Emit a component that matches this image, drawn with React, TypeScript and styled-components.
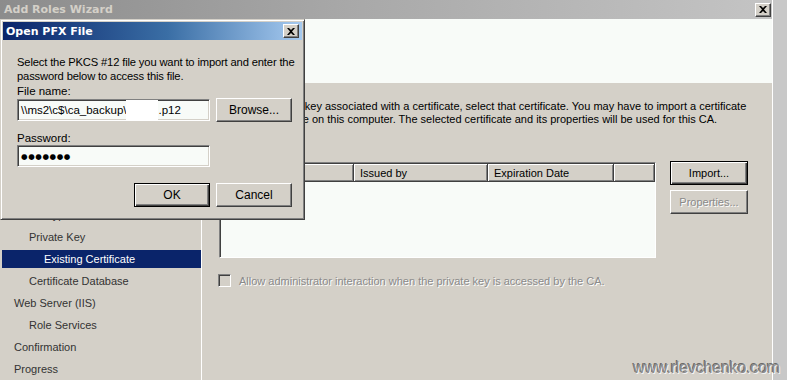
import styled, { createGlobalStyle } from "styled-components";

const GlobalStyle = createGlobalStyle`
    html, body {
        margin: 0;
        padding: 0;
        width: 787px;
        height: 380px;
        overflow: hidden;
        background: #c8c8c8;
    }
    * { box-sizing: border-box; }
`;

const Desktop = styled.div`
    position: relative;
    width: 787px;
    height: 380px;
    display: flex;
    background: #c8c8c8;
    font-family: "Liberation Sans", Arial, sans-serif;
    font-size: 11px;
    color: #000;
`;

const Wizard = styled.div`
    width: 773px;
    height: 380px;
    display: flex;
    flex-direction: column;
    background: #d4d0c8;
    border-right: 1px solid #ffffff;
`;

const TitleBar = styled.div<{ $active?: boolean }>`
    height: ${(p) => (p.$active ? 18 : 19)}px;
    flex-shrink: 0;
    display: flex;
    align-items: center;
    justify-content: space-between;
    padding: 0 ${(p) => (p.$active ? 3 : 1)}px 0 ${(p) => (p.$active ? 3 : 4)}px;
    background: ${(p) =>
        p.$active
            ? "linear-gradient(90deg, #0a246a 0%, #3a6ea5 55%, #a6caf0 100%)"
            : "linear-gradient(90deg, #8c8c8c 0%, #a8a8a8 45%, #c4c4c4 100%)"};
    color: ${(p) => (p.$active ? "#ffffff" : "#d4d0c8")};
    font-family: "DejaVu Sans", sans-serif;
    font-weight: bold;
    font-size: 11px;
`;

const CloseButton = styled.div`
    width: 16px;
    height: 14px;
    display: flex;
    align-items: center;
    justify-content: center;
    background: #d4d0c8;
    border-top: 1px solid #ffffff;
    border-left: 1px solid #ffffff;
    border-right: 1px solid #404040;
    border-bottom: 1px solid #404040;
    box-shadow: inset -1px -1px 0 #808080;
`;

const Header = styled.div`
    height: 64px;
    flex-shrink: 0;
    background: #f8fbf8;
`;

const Body = styled.div`
    flex: 1;
    display: flex;
`;

const Nav = styled.div`
    width: 202px;
    flex-shrink: 0;
    padding: 13px 0 0 2px;
    display: flex;
    flex-direction: column;
    gap: 4px;
    border-right: 1px solid #ffffff;
`;

const NavItem = styled.div<{ $level: number; $selected?: boolean }>`
    height: 18px;
    display: flex;
    align-items: center;
    padding-left: ${(p) => 12 + p.$level * 15}px;
    background: ${(p) => (p.$selected ? "#0a246a" : "transparent")};
    color: ${(p) => (p.$selected ? "#ffffff" : "#333333")};
    white-space: nowrap;
`;

const Content = styled.div`
    flex: 1;
    padding: 17px 0 0 17px;
    display: flex;
    flex-direction: column;
`;

const Description = styled.p`
    margin: 0;
    line-height: 13px;
    white-space: nowrap;
    color: #000;
`;

const Loose = styled.span`
    letter-spacing: 0.3px;
`;

const ListRow = styled.div`
    margin-top: 36px;
    display: flex;
    gap: 14px;
`;

const ListView = styled.div`
    width: 437px;
    height: 96px;
    background: #f8fbf8;
    border-top: 1px solid #808080;
    border-left: 1px solid #808080;
    border-right: 1px solid #ffffff;
    border-bottom: 1px solid #ffffff;
    box-shadow: inset 1px 1px 0 #404040;
    padding: 1px 0 0 1px;
`;

const ListHeader = styled.div`
    display: grid;
    grid-template-columns: 133px 134px 126px 1fr;
    height: 18px;
`;

const Column = styled.div`
    background: #d4d0c8;
    border-right: 1px solid #404040;
    border-bottom: 1px solid #404040;
    box-shadow: inset 1px 1px 0 #ffffff, inset -1px -1px 0 #808080;
    padding-left: 6px;
    display: flex;
    align-items: center;
    white-space: nowrap;
    overflow: hidden;
`;

const SideButtons = styled.div`
    display: flex;
    flex-direction: column;
    gap: 5px;
    margin-top: -1px;
`;

const Button = styled.button<{ $default?: boolean; $w: number; $size?: number }>`
    width: ${(p) => p.$w}px;
    height: 24px;
    padding: 0;
    background: #d4d0c8;
    font-family: "Liberation Sans", Arial, sans-serif;
    font-size: ${(p) => p.$size ?? 11}px;
    color: ${(p) => (p.disabled ? "#8a8a8a" : "#000")};
    text-shadow: ${(p) => (p.disabled ? "1px 1px 0 #ffffff" : "none")};
    border: 1px solid;
    border-color: ${(p) => (p.$default ? "#000" : "#ffffff #404040 #404040 #ffffff")};
    box-shadow: ${(p) =>
        p.$default
            ? "inset 1px 1px 0 #ffffff, inset -1px -1px 0 #404040, inset -2px -2px 0 #808080"
            : "inset -1px -1px 0 #808080"};
`;

const CheckRow = styled.div`
    margin-top: 16px;
    margin-left: -1px;
    display: flex;
    align-items: center;
    gap: 8px;
    color: #8a8a8a;
    text-shadow: 1px 1px 0 #ffffff;
    white-space: nowrap;
`;

const CheckBox = styled.div`
    width: 13px;
    height: 13px;
    background: #d4d0c8;
    border-top: 1px solid #808080;
    border-left: 1px solid #808080;
    border-right: 1px solid #ffffff;
    border-bottom: 1px solid #ffffff;
    box-shadow: inset 1px 1px 0 #404040;
`;

const Edge = styled.div`
    flex: 1;
    background: #c8c8c8;
`;

const Dialog = styled.div`
    position: absolute;
    left: 0;
    top: 19px;
    width: 305px;
    height: 201px;
    background: #d4d0c8;
    border-top: 1px solid #d4d0c8;
    border-left: 1px solid #d4d0c8;
    border-right: 1px solid #404040;
    border-bottom: 1px solid #404040;
    box-shadow: inset 1px 1px 0 #ffffff, inset -1px -1px 0 #808080;
    padding: 2px;
    font-size: 11px;
`;

const DialogBody = styled.div`
    padding: 15px 0 0 14px;
    display: flex;
    flex-direction: column;
`;

const Prompt = styled.p`
    margin: 0;
    line-height: 14px;
    white-space: nowrap;
    letter-spacing: -0.15px;
    font-size: 11.2px;
    color: #000;
`;

const Label = styled.div<{ $top: number }>`
    margin-top: ${(p) => p.$top}px;
    line-height: 14px;
    font-size: 11.5px;
`;

const FieldRow = styled.div`
    display: flex;
    gap: 6px;
    align-items: center;
`;

const TextField = styled.div`
    width: 193px;
    height: 22px;
    background: #f8fbf8;
    border-top: 1px solid #808080;
    border-left: 1px solid #808080;
    border-right: 1px solid #ffffff;
    border-bottom: 1px solid #ffffff;
    box-shadow: inset 1px 1px 0 #404040, inset -1px -1px 0 #d4d0c8;
    padding-left: 3px;
    display: flex;
    align-items: center;
    white-space: nowrap;
    overflow: hidden;
    font-size: 11.5px;
`;

const Redacted = styled.span`
    display: inline-block;
    width: 32px;
    height: 20px;
    background: #ffffff;
`;

const Dots = styled.span`
    font-family: "DejaVu Sans", sans-serif;
    font-size: 7.5px;
    letter-spacing: 0.6px;
`;

const DialogButtons = styled.div`
    margin-top: 16px;
    display: flex;
    gap: 6px;
    padding-left: 117px;
`;

const Watermark = styled.div`
    position: absolute;
    right: 7px;
    bottom: 3px;
    font-size: 16px;
    color: #8c8c8c;
    text-shadow: 1px 1px 0 #f4f4f4, -1px -1px 0 #6a6a6a;
    letter-spacing: -0.2px;
`;

function XGlyph() {
    return (
        <svg width="8" height="7" viewBox="0 0 8 7">
            <path d="M0 0 L2 0 L4 2 L6 0 L8 0 L5 3.5 L8 7 L6 7 L4 5 L2 7 L0 7 L3 3.5 Z" fill="#000" />
        </svg>
    );
}

const navItems: { label: string; level: number; selected?: boolean }[] = [
    { label: "Before You Begin", level: 0 },
    { label: "Server Roles", level: 0 },
    { label: "Active Directory Certificate Services", level: 0 },
    { label: "Role Services", level: 1 },
    { label: "Setup Type", level: 1 },
    { label: "CA Type", level: 1 },
    { label: "Private Key", level: 1 },
    { label: "Existing Certificate", level: 2, selected: true },
    { label: "Certificate Database", level: 1 },
    { label: "Web Server (IIS)", level: 0 },
    { label: "Role Services", level: 1 },
    { label: "Confirmation", level: 0 },
    { label: "Progress", level: 0 },
];

export default function App() {
    return (
        <>
            <GlobalStyle />
            <Desktop>
                <Wizard>
                    <TitleBar>
                        <span>Add Roles Wizard</span>
                        <CloseButton>
                            <XGlyph />
                        </CloseButton>
                    </TitleBar>
                    <Header />
                    <Body>
                        <Nav>
                            {navItems.map((item, i) => (
                                <NavItem key={i} $level={item.level} $selected={item.selected}>
                                    {item.label}
                                </NavItem>
                            ))}
                        </Nav>
                        <Content>
                            <Description>
                                <Loose>To use a private </Loose>key associated with a certificate, select that certificate. You may have to import a certificate
                                <br />
                                if it is not available on this computer. The selected certificate and its properties will be used for this CA.
                            </Description>
                            <ListRow>
                                <ListView>
                                    <ListHeader>
                                        <Column>Issued to</Column>
                                        <Column>Issued by</Column>
                                        <Column>Expiration Date</Column>
                                        <Column />
                                    </ListHeader>
                                </ListView>
                                <SideButtons>
                                    <Button $default $w={78}>Import...</Button>
                                    <Button $w={78} disabled>Properties...</Button>
                                </SideButtons>
                            </ListRow>
                            <CheckRow>
                                <CheckBox />
                                <span>Allow administrator interaction when the private key is accessed by the CA.</span>
                            </CheckRow>
                        </Content>
                    </Body>
                </Wizard>
                <Edge />

                <Dialog>
                    <TitleBar $active>
                        <span>Open PFX File</span>
                        <CloseButton>
                            <XGlyph />
                        </CloseButton>
                    </TitleBar>
                    <DialogBody>
                        <Prompt>
                            Select the PKCS #12 file you want to import and enter the
                            <br />
                            password below to access this file.
                        </Prompt>
                        <Label $top={1}>File name:</Label>
                        <FieldRow>
                            <TextField>
                                \\ms2\c$\ca_backup\<Redacted />.p12
                            </TextField>
                            <Button $w={76} $size={12}>Browse...</Button>
                        </FieldRow>
                        <Label $top={9}>Password:</Label>
                        <FieldRow>
                            <TextField>
                                <Dots>●●●●●●●</Dots>
                            </TextField>
                        </FieldRow>
                        <DialogButtons>
                            <Button $default $w={76} $size={12}>OK</Button>
                            <Button $w={76} $size={12}>Cancel</Button>
                        </DialogButtons>
                    </DialogBody>
                </Dialog>

                <Watermark>www.rlevchenko.com</Watermark>
            </Desktop>
        </>
    );
}
